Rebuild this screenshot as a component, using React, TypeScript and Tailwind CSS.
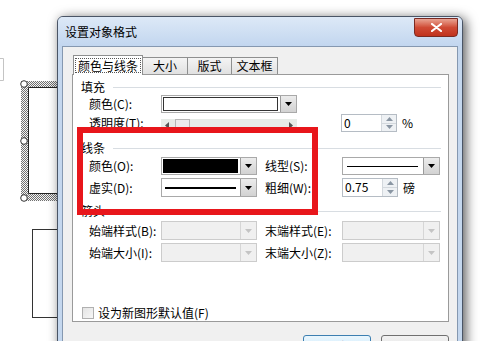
import React from "react";

function Tri({ c = "#000" }: { c?: string }) {
  return (
    <svg width="7" height="4" viewBox="0 0 7 4">
      <path d="M0 0h7L3.5 4z" fill={c} />
    </svg>
  );
}

function DropBtn({ disabled }: { disabled?: boolean }) {
  return (
    <div
      className={
        disabled
          ? "w-[16px] h-full flex items-center justify-center border-l border-[#d6d6d6] bg-[#f0f0f0]"
          : "w-[16px] h-full flex items-center justify-center border-l border-[#9a9a9a] bg-linear-to-b from-[#ececec] to-[#d2d2d2]"
      }
    >
      <Tri c={disabled ? "#c4c4c4" : "#000"} />
    </div>
  );
}

function Combo({
  cls,
  children,
  disabled,
}: {
  cls: string;
  children?: React.ReactNode;
  disabled?: boolean;
}) {
  return (
    <div
      className={
        (disabled
          ? "flex h-full border border-[#cccccc] bg-[#f0f0f0] "
          : "flex h-full border border-[#a9a9a9] bg-white ") + cls
      }
    >
      <div className="flex-1 flex p-[1px] pr-[2px]">{children}</div>
      <DropBtn disabled={disabled} />
    </div>
  );
}

function Spin({ v, unit }: { v: string; unit: string }) {
  return (
    <div className="flex items-center h-full">
      <div className="w-[56px] h-full border border-[#b5bcc4] bg-white flex">
        <div className="flex-1 pl-[2px] text-[12px] leading-[16px]">{v}</div>
        <div className="w-[15px] flex flex-col border-l border-[#d3d8dd] bg-[#eef1f4]">
          <div className="flex-1 flex items-center justify-center border-b border-[#d3d8dd]">
            <svg width="7" height="4" viewBox="0 0 7 4">
              <path d="M0 4h7L3.5 0z" fill="#8a96a3" />
            </svg>
          </div>
          <div className="flex-1 flex items-center justify-center">
            <Tri c="#8a96a3" />
          </div>
        </div>
      </div>
      <span className="ml-[5px] text-[12px] leading-[14px]">{unit}</span>
    </div>
  );
}

function Header({ t, cls }: { t: string; cls: string }) {
  return (
    <div className={"flex items-center h-[14px] pl-[8px] pr-[7px] " + cls}>
      <span className="text-[12px] leading-[14px] whitespace-nowrap">{t}</span>
      <div className="flex-1 h-px bg-[#d8dde2] ml-[8px]" />
    </div>
  );
}

const lbl1 = "w-[72px] shrink-0 text-[12px] leading-[14px] whitespace-nowrap";
const lbl2 = "w-[77px] shrink-0 text-[12px] leading-[14px] whitespace-nowrap";

function Tab({ t, sel, w }: { t: string; sel?: boolean; w: string }) {
  if (sel)
    return (
      <div
        className={
          "h-[20px] -mb-px relative z-10 bg-white border border-b-0 border-[#8e8f8f] flex items-center justify-center " +
          w
        }
      >
        <span className="px-[2px] border border-dotted border-[#555] text-[12px] leading-[13px]">
          {t}
        </span>
      </div>
    );
  return (
    <div
      className={
        "h-[17px] bg-linear-to-b from-[#f4f4f4] to-[#e1e1e1] border border-b-0 border-l-0 border-[#8e8f8f] flex items-center justify-center text-[12px] leading-[14px] " +
        w
      }
    >
      {t}
    </div>
  );
}

export default function App() {
  return (
    <div className="relative w-[500px] h-[341px] overflow-hidden bg-white font-['Noto_Sans_CJK_SC','Noto_Sans',sans-serif] text-black">
      {/* background canvas drawings */}
      <svg className="absolute left-0 top-0" width="70" height="341" viewBox="0 0 70 341">
        <defs>
          <pattern id="hatch" width="2" height="2" patternUnits="userSpaceOnUse">
            <rect width="2" height="2" fill="#f4f4f4" />
            <rect width="1" height="1" fill="#6f6f6f" />
            <rect x="1" y="1" width="1" height="1" fill="#6f6f6f" />
          </pattern>
        </defs>
        <path d="M0 58.5H3.5V80.5H0" fill="none" stroke="#c4c4c4" />
        <rect x="21" y="81" width="45" height="6" fill="url(#hatch)" />
        <rect x="21" y="81" width="7" height="120" fill="url(#hatch)" />
        <rect x="21" y="194" width="45" height="7" fill="url(#hatch)" />
        <path d="M66 87.5H28.5V193.5H66" fill="none" stroke="#222" />
        <circle cx="24" cy="84" r="3.3" fill="#fff" stroke="#333" />
        <circle cx="24" cy="141" r="3.3" fill="#fff" stroke="#333" />
        <circle cx="24" cy="198" r="3.3" fill="#fff" stroke="#333" />
        <rect x="32.5" y="229.5" width="40" height="88" fill="#fff" stroke="#333" />
      </svg>

      {/* dialog window */}
      <div className="absolute left-[57px] top-[16px] w-[406px] h-[360px] rounded-t-[6px] border border-[#4a5566] bg-[#c4d7ee] shadow-[3px_2px_12px_rgba(0,0,0,0.65)] flex flex-col">
        <div className="h-[29px] shrink-0 rounded-t-[5px] bg-linear-to-b from-[#dde9f7] to-[#c2d6ef] flex items-start justify-between pl-[7px] pr-[4px]">
          <span className="mt-[8px] text-[12px] leading-[14px] text-black">设置对象格式</span>
          <div className="mt-[1px] w-[44px] h-[19px] rounded-b-[4px] border border-[#7a2a22] bg-linear-to-b from-[#e8a393] via-[#cf4a35] to-[#c0321d] flex items-center justify-center">
            <svg width="11" height="9" viewBox="0 0 11 9">
              <path d="M1 1L10 8M10 1L1 8" stroke="#fff" strokeWidth="2.2" strokeLinecap="round" />
            </svg>
          </div>
        </div>
        <div className="mx-[4px] flex-1 border border-[#8598b0] bg-[#f0f0f0] pl-[9px] pr-[8px] pt-[8px]">
          {/* tabs */}
          <div className="flex items-end h-[19px] pl-[1px]">
            <Tab t="颜色与线条" sel w="w-[70px]" />
            <Tab t="大小" w="w-[45px]" />
            <Tab t="版式" w="w-[44px]" />
            <Tab t="文本框" w="w-[46px]" />
          </div>
          {/* panel */}
          <div className="border border-[#9a9a9a] bg-white flex flex-col pb-[1px]">
            <Header t="填充" cls="mt-[5px]" />
            <div className="flex items-center h-[18px] mt-[1px] pl-[16px]">
              <span className={lbl1}>颜色(C):</span>
              <Combo cls="w-[136px]">
                <div className="flex-1 border border-[#333] bg-white" />
              </Combo>
            </div>
            <div className="flex items-center h-[18px] mt-[1px] pl-[16px]">
              <span className={lbl1}>透明度(T):</span>
              <div className="w-[136px] h-[13px] mt-[4px] bg-[#e7ece8] flex items-center">
                <div className="w-[12px] h-full flex items-center justify-center">
                  <svg width="4" height="7" viewBox="0 0 4 7">
                    <path d="M4 0v7L0 3.5z" fill="#555" />
                  </svg>
                </div>
                <div className="w-[15px] h-full ml-[2px] border border-[#b5b5b5] bg-[#ececec]" />
                <div className="flex-1" />
                <div className="w-[12px] h-full flex items-center justify-center">
                  <svg width="4" height="7" viewBox="0 0 4 7">
                    <path d="M0 0v7L4 3.5z" fill="#555" />
                  </svg>
                </div>
              </div>
              <div className="w-[44px] shrink-0" />
              <Spin v="0" unit="%" />
            </div>

            <Header t="线条" cls="mt-[9px]" />
            <div className="flex items-center h-[18px] mt-[2px] pl-[16px]">
              <span className={lbl1}>颜色(O):</span>
              <Combo cls="w-[96px]">
                <div className="flex-1 bg-black" />
              </Combo>
              <div className="w-[8px] shrink-0" />
              <span className={lbl2}>线型(S):</span>
              <Combo cls="w-[98px]">
                <div className="flex-1 flex items-center px-[3px]">
                  <div className="flex-1 h-px bg-black" />
                </div>
              </Combo>
            </div>
            <div className="flex items-center h-[19px] mt-[3px] pl-[16px]">
              <span className={lbl1}>虚实(D):</span>
              <Combo cls="w-[96px]">
                <div className="flex-1 flex items-center px-[2px]">
                  <div className="flex-1 h-[2px] bg-black" />
                </div>
              </Combo>
              <div className="w-[8px] shrink-0" />
              <span className={lbl2}>粗细(W):</span>
              <Spin v="0.75" unit="磅" />
            </div>

            <Header t="箭头" cls="mt-[7px]" />
            <div className="flex items-center h-[19px] mt-[3px] pl-[16px]">
              <span className={lbl1}>始端样式(B):</span>
              <Combo cls="w-[96px]" disabled />
              <div className="w-[8px] shrink-0" />
              <span className={lbl2}>末端样式(E):</span>
              <Combo cls="w-[98px]" disabled />
            </div>
            <div className="flex items-center h-[19px] mt-[3px] pl-[16px]">
              <span className={lbl1}>始端大小(I):</span>
              <Combo cls="w-[96px]" disabled />
              <div className="w-[8px] shrink-0" />
              <span className={lbl2}>末端大小(Z):</span>
              <Combo cls="w-[98px]" disabled />
            </div>

            <div className="flex items-center h-[14px] mt-[44px] pl-[9px]">
              <div className="w-[12px] h-[12px] border border-[#b0b0b0] bg-linear-to-br from-[#e4e4e4] to-[#f7f7f7]" />
              <span className="ml-[4px] text-[12px] leading-[14px]">设为新图形默认值(F)</span>
            </div>
          </div>
          {/* buttons */}
          <div className="flex justify-end gap-[10px] mt-[13px]">
            <div className="w-[68px] h-[23px] rounded-[3px] border border-[#3c7fb1] bg-linear-to-b from-[#eaf6fd] to-[#bee6fd] flex items-center justify-center text-[12px]">
              确定
            </div>
            <div className="w-[68px] h-[23px] rounded-[3px] border border-[#707070] bg-linear-to-b from-[#f2f2f2] to-[#dddddd] flex items-center justify-center text-[12px]">
              取消
            </div>
          </div>
        </div>
      </div>

      {/* red highlight box */}
      <div className="absolute left-[77px] top-[127px] w-[241px] h-[88px] border-[6px] border-[#e8161b]" />
    </div>
  );
}
